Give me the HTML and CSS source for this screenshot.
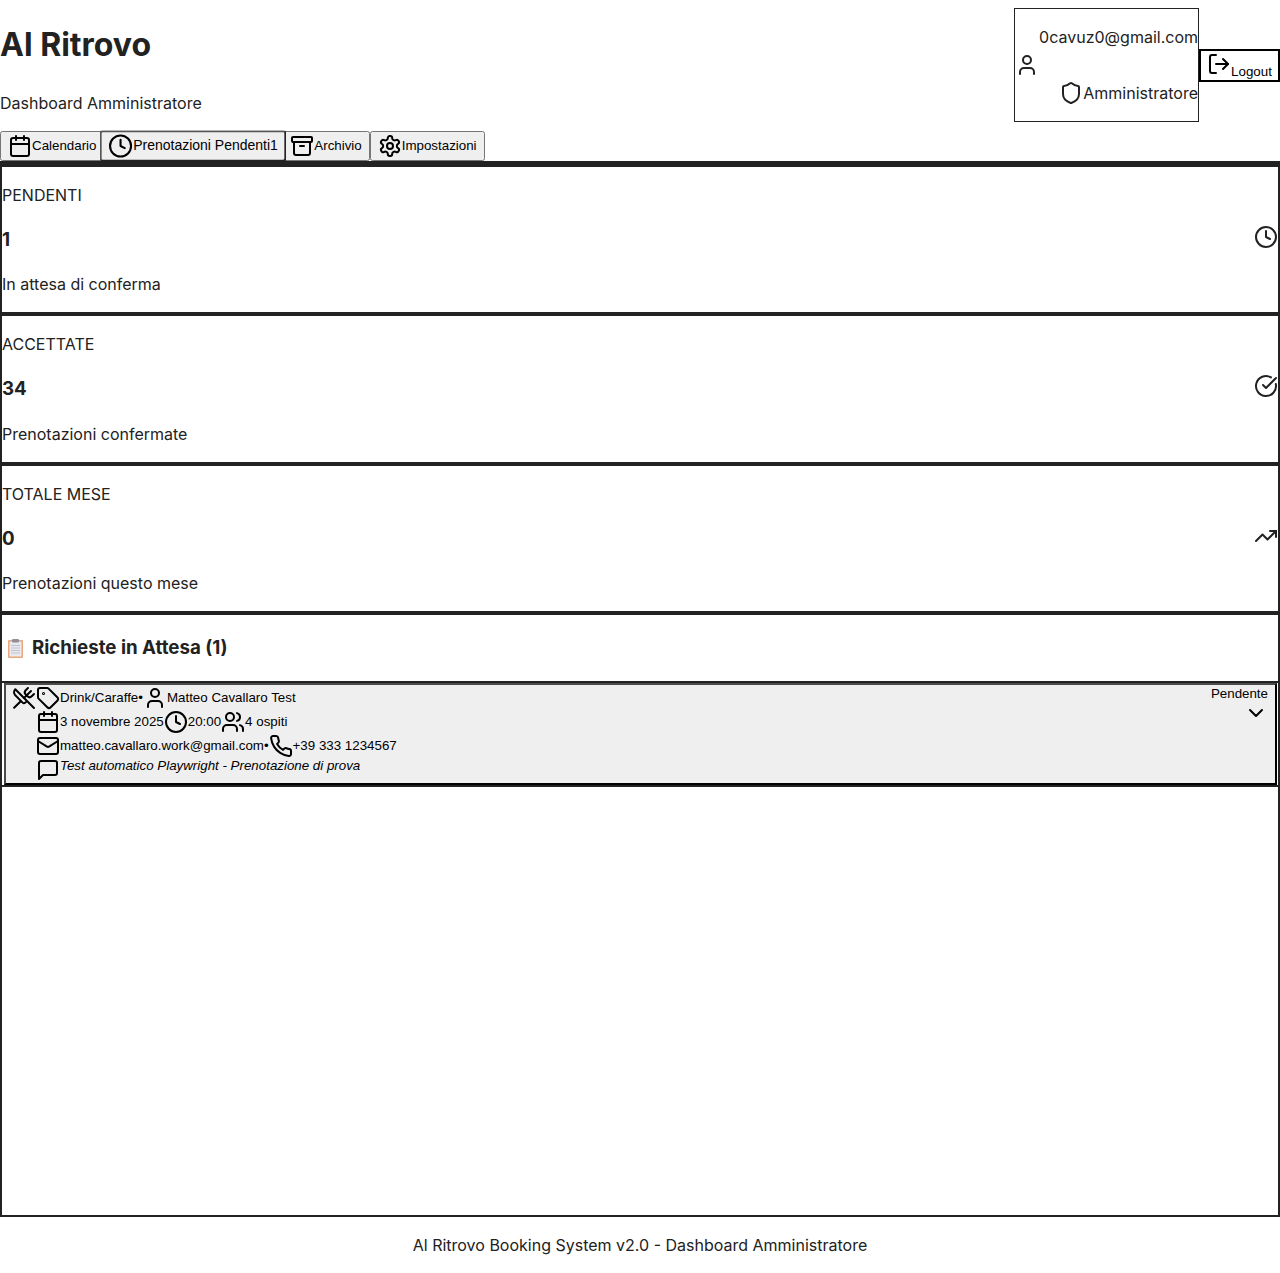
FILE: index.html
```html
<!DOCTYPE html>
<html lang="it">
<head>
<meta charset="utf-8">
<title>Al Ritrovo</title>
<link rel="stylesheet" href="styles.css">
</head>
<body>
<svg class="sprite" width="0" height="0">
  <symbol id="i-calendar" viewBox="0 0 24 24"><path d="M8 2v4"/><path d="M16 2v4"/><rect x="3" y="4" width="18" height="18" rx="2"/><path d="M3 10h18"/></symbol>
  <symbol id="i-clock" viewBox="0 0 24 24"><circle cx="12" cy="12" r="10"/><path d="M12 6v6l4 2"/></symbol>
  <symbol id="i-archive" viewBox="0 0 24 24"><rect x="2" y="3" width="20" height="5" rx="1"/><path d="M4 8v11a2 2 0 0 0 2 2h12a2 2 0 0 0 2-2V8"/><path d="M10 12h4"/></symbol>
  <symbol id="i-gear" viewBox="0 0 24 24"><path d="M12.22 2h-.44a2 2 0 0 0-2 2v.18a2 2 0 0 1-1 1.73l-.43.25a2 2 0 0 1-2 0l-.15-.08a2 2 0 0 0-2.73.73l-.22.38a2 2 0 0 0 .73 2.73l.15.1a2 2 0 0 1 1 1.72v.51a2 2 0 0 1-1 1.74l-.15.09a2 2 0 0 0-.73 2.73l.22.38a2 2 0 0 0 2.73.73l.15-.08a2 2 0 0 1 2 0l.43.25a2 2 0 0 1 1 1.73V20a2 2 0 0 0 2 2h.44a2 2 0 0 0 2-2v-.18a2 2 0 0 1 1-1.73l.43-.25a2 2 0 0 1 2 0l.15.08a2 2 0 0 0 2.73-.73l.22-.39a2 2 0 0 0-.73-2.73l-.15-.08a2 2 0 0 1-1-1.74v-.5a2 2 0 0 1 1-1.74l.15-.09a2 2 0 0 0 .73-2.73l-.22-.38a2 2 0 0 0-2.73-.73l-.15.08a2 2 0 0 1-2 0l-.43-.25a2 2 0 0 1-1-1.73V4a2 2 0 0 0-2-2z"/><circle cx="12" cy="12" r="3"/></symbol>
  <symbol id="i-user" viewBox="0 0 24 24"><path d="M19 21v-2a4 4 0 0 0-4-4H9a4 4 0 0 0-4 4v2"/><circle cx="12" cy="7" r="4"/></symbol>
  <symbol id="i-shield" viewBox="0 0 24 24"><path d="M20 13c0 5-3.5 7.5-7.66 8.95a1 1 0 0 1-.67-.01C7.5 20.5 4 18 4 13V6a1 1 0 0 1 1-1c2 0 4.5-1.2 6.24-2.72a1.17 1.17 0 0 1 1.52 0C14.51 3.81 17 5 19 5a1 1 0 0 1 1 1z"/></symbol>
  <symbol id="i-logout" viewBox="0 0 24 24"><path d="M9 21H5a2 2 0 0 1-2-2V5a2 2 0 0 1 2-2h4"/><path d="m16 17 5-5-5-5"/><path d="M21 12H9"/></symbol>
  <symbol id="i-check" viewBox="0 0 24 24"><path d="M21.801 10A10 10 0 1 1 17 3.335"/><path d="m9 11 3 3L22 4"/></symbol>
  <symbol id="i-trend" viewBox="0 0 24 24"><path d="M16 7h6v6"/><path d="m22 7-8.5 8.5-5-5L2 17"/></symbol>
  <symbol id="i-utensils" viewBox="0 0 24 24"><path d="m16 2-2.3 2.3a3 3 0 0 0 0 4.2l1.8 1.8a3 3 0 0 0 4.2 0L22 8"/><path d="M15 15 3.3 3.3a4.2 4.2 0 0 0 0 6l7.3 7.3c.7.7 2 .7 2.8 0L15 15Zm0 0 7 7"/><path d="m2.1 21.8 6.4-6.3"/><path d="m19 5-7 7"/></symbol>
  <symbol id="i-tag" viewBox="0 0 24 24"><path d="M12.586 2.586A2 2 0 0 0 11.172 2H4a2 2 0 0 0-2 2v7.172a2 2 0 0 0 .586 1.414l8.704 8.704a2.426 2.426 0 0 0 3.42 0l6.58-6.58a2.426 2.426 0 0 0 0-3.42z"/><circle cx="7.5" cy="7.5" r=".5"/></symbol>
  <symbol id="i-users" viewBox="0 0 24 24"><path d="M16 21v-2a4 4 0 0 0-4-4H6a4 4 0 0 0-4 4v2"/><circle cx="9" cy="7" r="4"/><path d="M22 21v-2a4 4 0 0 0-3-3.87"/><path d="M16 3.13a4 4 0 0 1 0 7.75"/></symbol>
  <symbol id="i-mail" viewBox="0 0 24 24"><rect x="2" y="4" width="20" height="16" rx="2"/><path d="m22 7-8.97 5.7a1.94 1.94 0 0 1-2.06 0L2 7"/></symbol>
  <symbol id="i-phone" viewBox="0 0 24 24"><path d="M22 16.92v3a2 2 0 0 1-2.18 2 19.79 19.79 0 0 1-8.63-3.07 19.5 19.5 0 0 1-6-6 19.79 19.79 0 0 1-3.07-8.67A2 2 0 0 1 4.11 2h3a2 2 0 0 1 2 1.72 12.84 12.84 0 0 0 .7 2.81 2 2 0 0 1-.45 2.11L8.09 9.91a16 16 0 0 0 6 6l1.27-1.27a2 2 0 0 1 2.11-.45 12.84 12.84 0 0 0 2.81.7A2 2 0 0 1 22 16.92z"/></symbol>
  <symbol id="i-message" viewBox="0 0 24 24"><path d="M21 15a2 2 0 0 1-2 2H7l-4 4V5a2 2 0 0 1 2-2h14a2 2 0 0 1 2 2z"/></symbol>
  <symbol id="i-chevron" viewBox="0 0 24 24"><path d="m6 9 6 6 6-6"/></symbol>
</svg>

<header class="top">
  <div class="brand">
    <h1>Al Ritrovo</h1>
    <p>Dashboard Amministratore</p>
  </div>
  <div class="account">
    <div class="user-box">
      <svg class="ico ico-dark"><use href="#i-user"/></svg>
      <div class="user-info">
        <p>0cavuz0@gmail.com</p>
        <p class="role"><svg class="ico ico-dark"><use href="#i-shield"/></svg>Amministratore</p>
      </div>
    </div>
    <button class="logout" type="button"><svg class="ico"><use href="#i-logout"/></svg>Logout</button>
  </div>
</header>

<nav class="tabs">
  <button type="button"><svg class="ico"><use href="#i-calendar"/></svg>Calendario</button><button class="active" type="button"><svg class="ico"><use href="#i-clock"/></svg>Prenotazioni Pendenti<span>1</span></button><button type="button"><svg class="ico"><use href="#i-archive"/></svg>Archivio</button><button type="button"><svg class="ico"><use href="#i-gear"/></svg>Impostazioni</button>
</nav>

<main>
  <section class="stat">
    <div><p>PENDENTI</p><h3>1</h3><p>In attesa di conferma</p></div>
    <svg class="ico ico-dark"><use href="#i-clock"/></svg>
  </section>
  <section class="stat">
    <div><p>ACCETTATE</p><h3>34</h3><p>Prenotazioni confermate</p></div>
    <svg class="ico ico-dark"><use href="#i-check"/></svg>
  </section>
  <section class="stat">
    <div><p>TOTALE MESE</p><h3>0</h3><p>Prenotazioni questo mese</p></div>
    <svg class="ico ico-dark"><use href="#i-trend"/></svg>
  </section>

  <section class="requests">
    <h3 class="requests-title">
      <svg class="clipboard" viewBox="0 0 15 19"><rect x="0" y="1" width="15" height="18" rx="1" fill="#e9a77a"/><rect x="1.5" y="2.5" width="12" height="15" fill="#e9e9f0"/><path d="M3 6.5h9M3 9h9M3 11.5h9M3 14h9" stroke="#b4b6c2" stroke-width=".8"/><rect x="4" y="0" width="7" height="3.5" rx="1" fill="#8d9098"/></svg>
      <span>Richieste in Attesa (1)</span>
    </h3>
    <div class="request-band">
      <button class="request" type="button">
        <svg class="ico"><use href="#i-utensils"/></svg>
        <span class="details">
          <span class="line"><svg class="ico"><use href="#i-tag"/></svg>Drink/Caraffe<span>•</span><svg class="ico"><use href="#i-user"/></svg>Matteo Cavallaro Test</span>
          <span class="line"><svg class="ico"><use href="#i-calendar"/></svg>3 novembre 2025<svg class="ico"><use href="#i-clock"/></svg>20:00<svg class="ico"><use href="#i-users"/></svg>4 ospiti</span>
          <span class="line"><svg class="ico"><use href="#i-mail"/></svg>matteo.cavallaro.work@gmail.com<span>•</span><svg class="ico"><use href="#i-phone"/></svg>+39 333 1234567</span>
          <span class="line note"><svg class="ico"><use href="#i-message"/></svg><em>Test automatico Playwright - Prenotazione di prova</em></span>
        </span>
        <span class="status">
          <span>Pendente</span>
          <svg class="ico"><use href="#i-chevron"/></svg>
        </span>
      </button>
    </div>
  </section>
</main>

<footer>Al Ritrovo Booking System v2.0 - Dashboard Amministratore</footer>
</body>
</html>
```
FILE: styles.css
```css
* { box-sizing: border-box; }
html, body { margin: 0; padding: 0; }
body {
  font-family: Inter, "Liberation Sans", sans-serif;
  font-size: 16px;
  line-height: 1.5;
  color: #222;
  background: #fff;
}
.sprite { position: absolute; }
.ico {
  width: 24px;
  height: 24px;
  flex: none;
  fill: none;
  stroke: #000;
  stroke-width: 2;
  stroke-linecap: round;
  stroke-linejoin: round;
}
.ico-dark { stroke: #222; }

.top { display: flex; justify-content: space-between; align-items: center; }
.brand h1 { font-size: 32px; font-weight: 700; margin: 21.44px 0; }
.brand p { margin: 21.44px 0 16px; }
.account { display: flex; align-items: center; }
.user-box {
  display: flex;
  align-items: center;
  border: 1px solid #222;
  width: 185px;
  height: 114px;
}
.user-info {
  flex: 1;
  display: flex;
  flex-direction: column;
  gap: 32px;
  text-align: right;
}
.user-info p { margin: 0; }
.role { display: flex; align-items: center; justify-content: flex-end; }
.logout {
  border: 2px solid #000;
  background: #fff;
  color: #000;
  padding: 1px 6px;
  width: 81px;
  height: 33px;
  white-space: nowrap;
  font-family: "Liberation Sans", sans-serif;
  font-size: 13.33px;
}

.tabs {
  display: flex;
  border-bottom: 4px solid #222;
  height: 34px;
}
.tabs button {
  display: inline-block;
  padding: 1px 6px;
  font-family: "Liberation Sans", sans-serif;
  font-size: 13.33px;
  color: #000;
  height: 30px;
  white-space: nowrap;
}
.tabs .ico { vertical-align: middle; }
.tabs .active {
  border: 2px solid #222;
  border-top-color: #555;
  border-left-color: #555;
  border-radius: 3px;
  background: #efefef;
  transform: scale(1.05);
}

.stat {
  display: flex;
  justify-content: space-between;
  align-items: center;
  border: 2px solid #222;
}
.stat p { margin: 16px 0; }
.stat h3 { font-size: 18.72px; margin: 18.72px 0; }
.stat .ico { margin-bottom: 6px; }

.requests { border: 2px solid #222; height: 603.4px; }
.requests-title {
  display: flex;
  align-items: center;
  gap: 9px;
  font-size: 18.72px;
  margin: 18.72px 0;
  padding-left: 6px;
}
.clipboard { width: 15px; height: 19px; }
.request-band {
  border-top: 2px solid #222;
  border-bottom: 2px solid #222;
  padding: 0 1px 0 2px;
}
.request {
  display: flex;
  justify-content: space-between;
  align-items: flex-start;
  width: 100%;
  padding: 1px 7px 1px 6px;
  border: 2px solid #000;
  border-top-color: #4a4a4a;
  border-left-color: #4a4a4a;
  background: #efefef;
  font-family: "Liberation Sans", sans-serif;
  font-size: 13.33px;
  color: #000;
  text-align: left;
}
.details { display: flex; flex-direction: column; flex: 1; }
.line { display: flex; align-items: center; height: 24px; }
.note { align-items: flex-start; }
.status { display: flex; flex-direction: column; align-items: flex-end; }

footer { text-align: center; padding: 16px 0; }
```
